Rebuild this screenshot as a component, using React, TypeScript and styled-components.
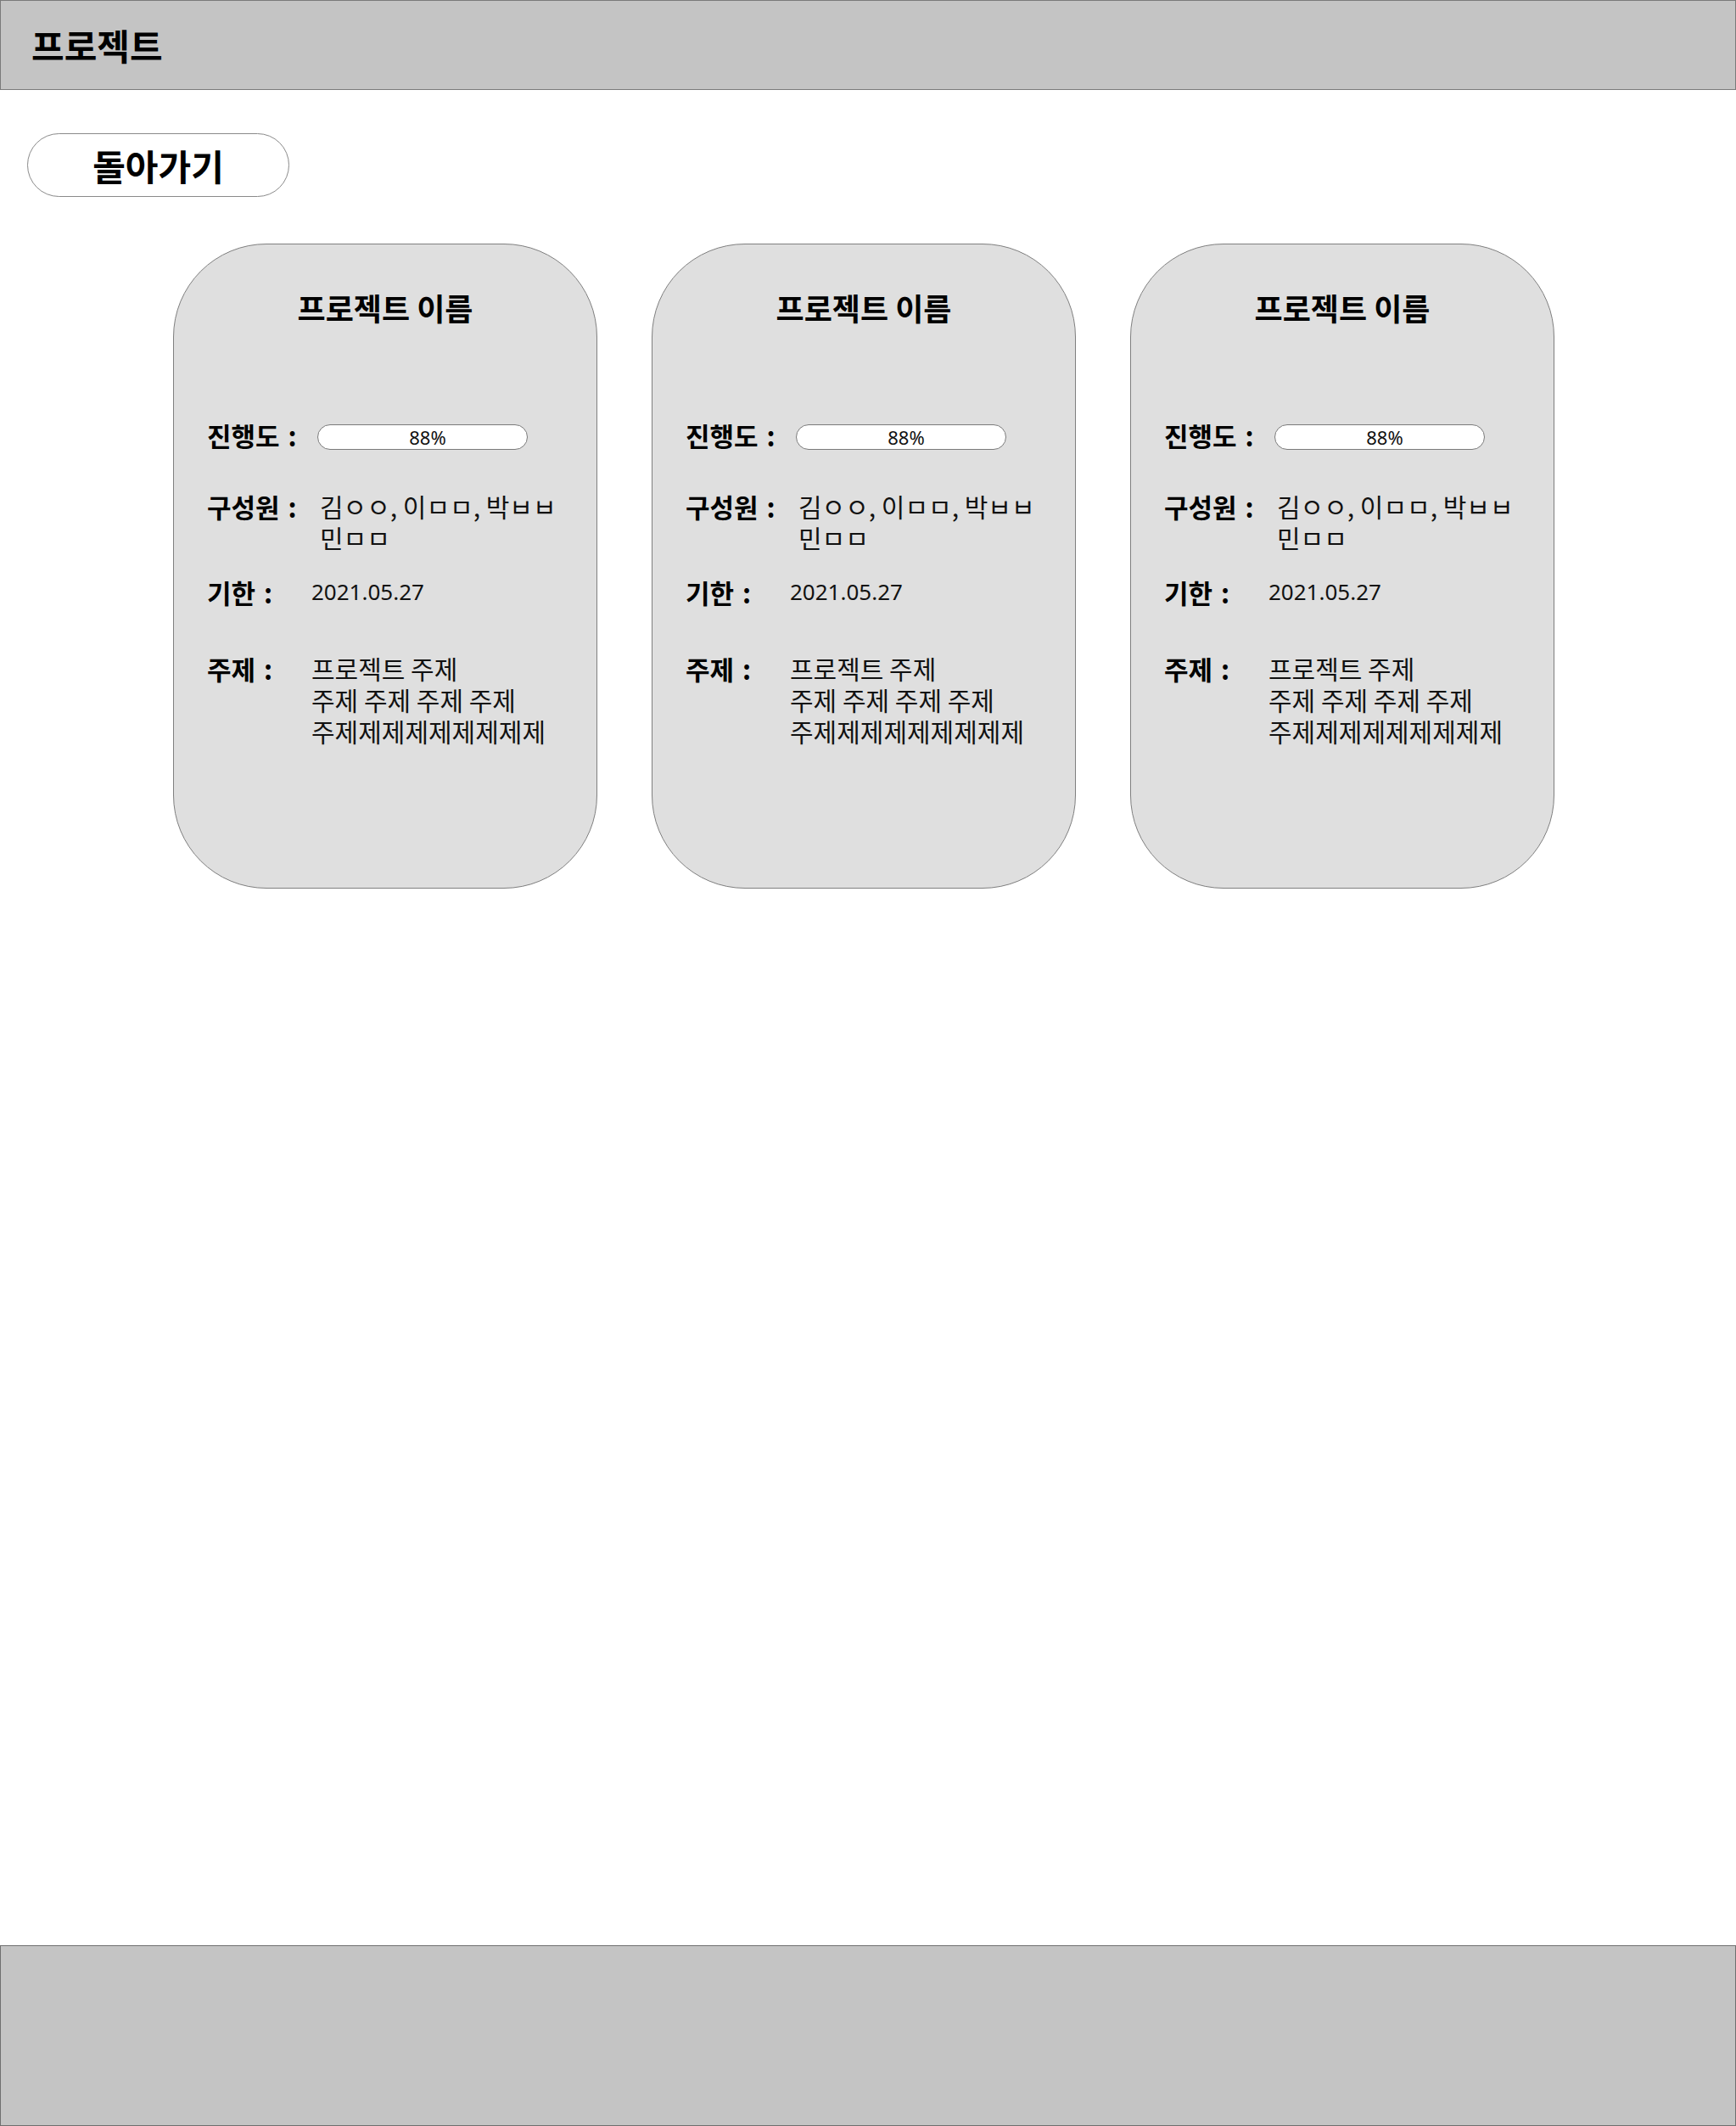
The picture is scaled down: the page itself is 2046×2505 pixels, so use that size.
import React from "react";
import styled, { createGlobalStyle } from "styled-components";

const GlobalStyle = createGlobalStyle`
  html, body {
    margin: 0;
    padding: 0;
    background: #ffffff;
  }
  body {
    font-family: "Noto Sans CJK KR", "Noto Sans", sans-serif;
    color: #000;
  }
  * { box-sizing: border-box; }
`;

const Page = styled.div`
  min-height: 100vh;
  display: flex;
  flex-direction: column;
`;

const Header = styled.header`
  height: 106px;
  background: #c4c4c4;
  border: 1px solid #7a7a7a;
  display: flex;
  align-items: center;
  padding-left: 36px;
`;

const HeaderTitle = styled.h1`
  margin: 0;
  font-size: 42px;
  line-height: 1;
  font-weight: 700;
`;

const Main = styled.main`
  flex: 1;
  display: flex;
  flex-direction: column;
`;

const BackButton = styled.button`
  margin: 51px 0 0 32px;
  width: 309px;
  height: 75px;
  border: 1px solid #8a8a8a;
  border-radius: 38px;
  background: #fff;
  display: flex;
  align-items: center;
  justify-content: center;
  cursor: pointer;
  font-family: inherit;
  padding: 0;
  font-size: 42px;
  font-weight: 700;
  line-height: 1;
  color: #000;
`;

const Cards = styled.section`
  display: flex;
  gap: 64px;
  padding-left: 204px;
  margin-top: 55px;
`;

const Card = styled.article`
  width: 500px;
  height: 760px;
  background: #dfdfdf;
  border: 1px solid #7f7f7f;
  border-radius: 110px;
  padding: 56px 20px 0 39px;
  display: flex;
  flex-direction: column;
`;

const CardTitle = styled.h2`
  margin: 0;
  padding-right: 19px;
  text-align: center;
  font-size: 36px;
  line-height: 36px;
  font-weight: 700;
`;

const Row = styled.div<{ $mt: number; $center?: boolean }>`
  display: flex;
  align-items: ${(p) => (p.$center ? "center" : "flex-start")};
  margin-top: ${(p) => p.$mt}px;
`;

const Label = styled.div`
  flex: 0 0 123px;
  font-size: 31px;
  line-height: 37px;
  font-weight: 700;
  word-spacing: 3px;
  white-space: pre;
`;

const Value = styled.div<{ $offset?: number }>`
  margin-left: ${(p) => p.$offset ?? 0}px;
  font-size: 30px;
  line-height: 37px;
  font-weight: 400;
  color: #111;
  white-space: pre-line;
`;

const DateValue = styled(Value)`
  font-family: "Noto Sans", sans-serif;
  font-size: 26px;
`;

const Progress = styled.div<{ $offset?: number }>`
  margin-left: ${(p) => p.$offset ?? 0}px;
  margin-top: 5px;
  width: 248px;
  height: 30px;
  border: 1px solid #7a7a7a;
  border-radius: 15px;
  background: #fff;
  display: flex;
  align-items: center;
  justify-content: center;
  padding-left: 12px;
  font-family: "Noto Sans", sans-serif;
  font-size: 22px;
  line-height: 1;
  color: #111;
`;

const Footer = styled.footer`
  height: 213px;
  background: #c4c4c4;
  border: 1px solid #707070;
`;

type Project = {
  name: string;
  progress: number;
  members: string[];
  deadline: string;
  topic: string[];
};

const projects: Project[] = [0, 1, 2].map(() => ({
  name: "프로젝트 이름",
  progress: 88,
  members: ["김ㅇㅇ, 이ㅁㅁ, 박ㅂㅂ", "민ㅁㅁ"],
  deadline: "2021.05.27",
  topic: ["프로젝트 주제", "주제 주제 주제 주제", "주제제제제제제제제제"],
}));

function ProjectCard({ p }: { p: Project }) {
  return (
    <Card>
      <CardTitle>{p.name}</CardTitle>
      <Row $mt={114} $center>
        <Label>{"진행도 :"}</Label>
        <Progress $offset={7}>{p.progress}%</Progress>
      </Row>
      <Row $mt={47}>
        <Label>{"구성원 :"}</Label>
        <Value $offset={10}>{p.members.join("\n")}</Value>
      </Row>
      <Row $mt={27}>
        <Label>{"기한 :"}</Label>
        <DateValue>{p.deadline}</DateValue>
      </Row>
      <Row $mt={53}>
        <Label>{"주제 :"}</Label>
        <Value>{p.topic.join("\n")}</Value>
      </Row>
    </Card>
  );
}

export default function App() {
  return (
    <>
      <GlobalStyle />
      <Page>
        <Header>
          <HeaderTitle>프로젝트</HeaderTitle>
        </Header>
        <Main>
          <BackButton type="button">돌아가기</BackButton>
          <Cards>
            {projects.map((p, i) => (
              <ProjectCard key={i} p={p} />
            ))}
          </Cards>
        </Main>
        <Footer />
      </Page>
    </>
  );
}
